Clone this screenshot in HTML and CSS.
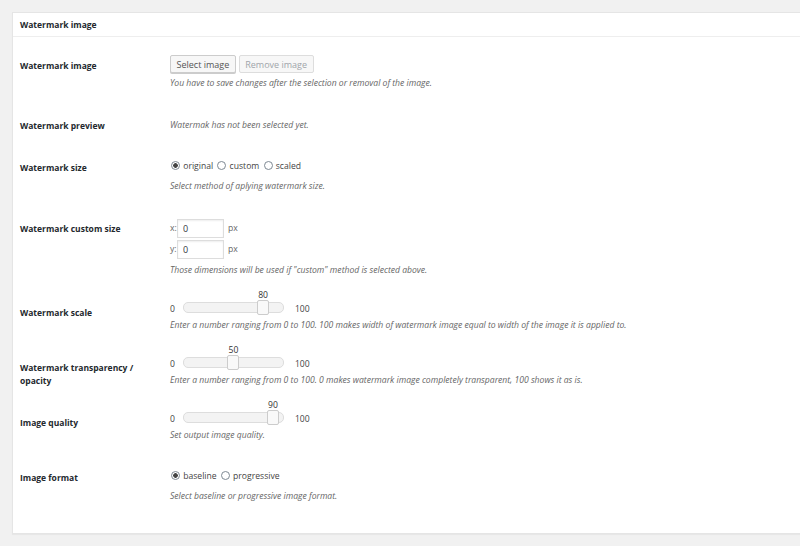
FILE: index.html
```html
<!DOCTYPE html>
<html lang="en">
<head>
  <meta charset="UTF-8">
  <title>Watermark settings</title>
  <link rel="stylesheet" href="styles.css">
</head>
<body>
  <div class="wrap">
    <div class="postbox">
      <h2 class="hndle">Watermark image</h2>
      <div class="inside">
        <div class="form-table">
          <!-- Image select -->
          <div class="row">
            <div class="th">Watermark image</div>
            <div class="td">
              <div class="buttons">
                <button class="button">Select image</button>
                <button class="button" disabled>Remove image</button>
              </div>
              <p class="description">You have to save changes after the selection or removal of the image.</p>
            </div>
          </div>
          <!-- Preview -->
          <div class="row">
            <div class="th">Watermark preview</div>
            <div class="td">
              <p class="description">Watermak has not been selected yet.</p>
            </div>
          </div>
          <!-- Size -->
          <div class="row">
            <div class="th">Watermark size</div>
            <div class="td">
              <div class="radios">
                <label><input type="radio" name="size" checked> original</label>
                <label><input type="radio" name="size"> custom</label>
                <label><input type="radio" name="size"> scaled</label>
              </div>
              <p class="description">Select method of aplying watermark size.</p>
            </div>
          </div>
          <!-- Custom size -->
          <div class="row">
            <div class="th">Watermark custom size</div>
            <div class="td">
              <div class="size-line">
                <span class="axis">x:</span>
                <input type="text" class="small-text" value="0">
                <span class="unit">px</span>
              </div>
              <div class="size-line">
                <span class="axis">y:</span>
                <input type="text" class="small-text" value="0">
                <span class="unit">px</span>
              </div>
              <p class="description">Those dimensions will be used if "custom" method is selected above.</p>
            </div>
          </div>
          <!-- Scale -->
          <div class="row">
            <div class="th">Watermark scale</div>
            <div class="td">
              <div class="slider-line">
                <span>0</span><span class="track"><span class="handle" style="left: 80%"><span class="tip">80</span></span></span><span>100</span>
              </div>
              <p class="description">Enter a number ranging from 0 to 100. 100 makes width of watermark image equal to width of the image it is applied to.</p>
            </div>
          </div>
          <!-- Opacity -->
          <div class="row">
            <div class="th">Watermark transparency / opacity</div>
            <div class="td">
              <div class="slider-line">
                <span>0</span><span class="track"><span class="handle" style="left: 50%"><span class="tip">50</span></span></span><span>100</span>
              </div>
              <p class="description">Enter a number ranging from 0 to 100. 0 makes watermark image completely transparent, 100 shows it as is.</p>
            </div>
          </div>
          <!-- Quality -->
          <div class="row">
            <div class="th">Image quality</div>
            <div class="td">
              <div class="slider-line">
                <span>0</span><span class="track"><span class="handle" style="left: 90%"><span class="tip">90</span></span></span><span>100</span>
              </div>
              <p class="description">Set output image quality.</p>
            </div>
          </div>
          <!-- Format -->
          <div class="row">
            <div class="th">Image format</div>
            <div class="td">
              <div class="radios">
                <label><input type="radio" name="format" checked> baseline</label>
                <label><input type="radio" name="format"> progressive</label>
              </div>
              <p class="description">Select baseline or progressive image format.</p>
            </div>
          </div>
        </div>
      </div>
    </div>
  </div>
</body>
</html>
```

FILE: styles.css
```css
/* General */
body {
  margin: 0;
  background: #f1f1f1;
  color: #444;
  font-family: 'Open Sans', sans-serif;
  font-size: 8.6px;
  line-height: 13px;
  overflow: hidden;
}
.wrap {
  margin: 12px -20px 12px 12px;
}
.postbox {
  background: #fff;
  border: 1px solid #e5e5e5;
  box-shadow: 0 1px 1px rgba(0, 0, 0, 0.04);
}
.hndle {
  margin: 0;
  padding: 5px 7px 5px 7px;
  font-size: 8.5px;
  line-height: 13px;
  font-weight: 700;
  color: #23282d;
  border-bottom: 1px solid #eee;
}
.inside {
  padding: 8px 7px 15px;
}
/* Rows */
.row {
  display: grid;
  grid-template-columns: 150px 1fr;
}
.th {
  padding: 14px 20px 14px 0;
  font-size: 8.5px;
  font-weight: 700;
  color: #23282d;
}
.td {
  padding: 10px 10px 15px 0;
}
.description {
  margin: 4px 0 0;
  font-style: italic;
  color: #666;
}
/* Buttons */
.buttons {
  display: flex;
  gap: 3px;
}
.button {
  height: 18px;
  padding: 0 5.5px;
  font-family: inherit;
  font-size: 9px;
  color: #555;
  background: #f7f7f7;
  border: 1px solid #ccc;
  border-radius: 2px;
  box-shadow: 0 1px 0 #ccc;
  cursor: pointer;
}
.button:disabled {
  color: #a0a5aa;
  border-color: #ddd;
  box-shadow: none;
  cursor: default;
}
/* Radios */
.radios {
  line-height: 19px;
  color: #444;
}
.radios label {
  margin-right: 1px;
}
.radios input {
  appearance: none;
  width: 9px;
  height: 9px;
  margin: 0 1px 0 1px;
  vertical-align: -1px;
  border: 1px solid #7e8993;
  border-radius: 50%;
  background: #fff;
}
.radios input:checked {
  background: radial-gradient(circle, #444 0 2px, #fff 2.6px);
}
/* Custom size */
.size-line {
  display: flex;
  align-items: center;
  height: 21px;
  color: #666;
}
.axis {
  width: 7px;
}
.small-text {
  box-sizing: border-box;
  width: 47px;
  height: 19px;
  margin: 0 4px 0 0;
  padding: 0 5px;
  font-family: inherit;
  font-size: 9px;
  color: #32373c;
  border: 1px solid #ddd;
  box-shadow: inset 0 1px 2px rgba(0, 0, 0, 0.07);
}
/* Sliders */
.slider-line {
  height: 13px;
  color: #444;
}
.track {
  position: relative;
  display: inline-block;
  box-sizing: border-box;
  width: 101px;
  height: 11px;
  margin: 0 11px 0 8px;
  vertical-align: -1px;
  background: #f3f3f3;
  border: 1px solid #ddd;
  border-radius: 5px;
}
.handle {
  position: absolute;
  top: -3px;
  box-sizing: border-box;
  width: 12px;
  height: 15px;
  margin-left: -6px;
  background: #f9f9f9;
  border: 1px solid #ccc;
  border-radius: 2px;
}
.tip {
  position: absolute;
  top: -12px;
  left: 50%;
  transform: translateX(-50%);
  color: #333;
}
```
